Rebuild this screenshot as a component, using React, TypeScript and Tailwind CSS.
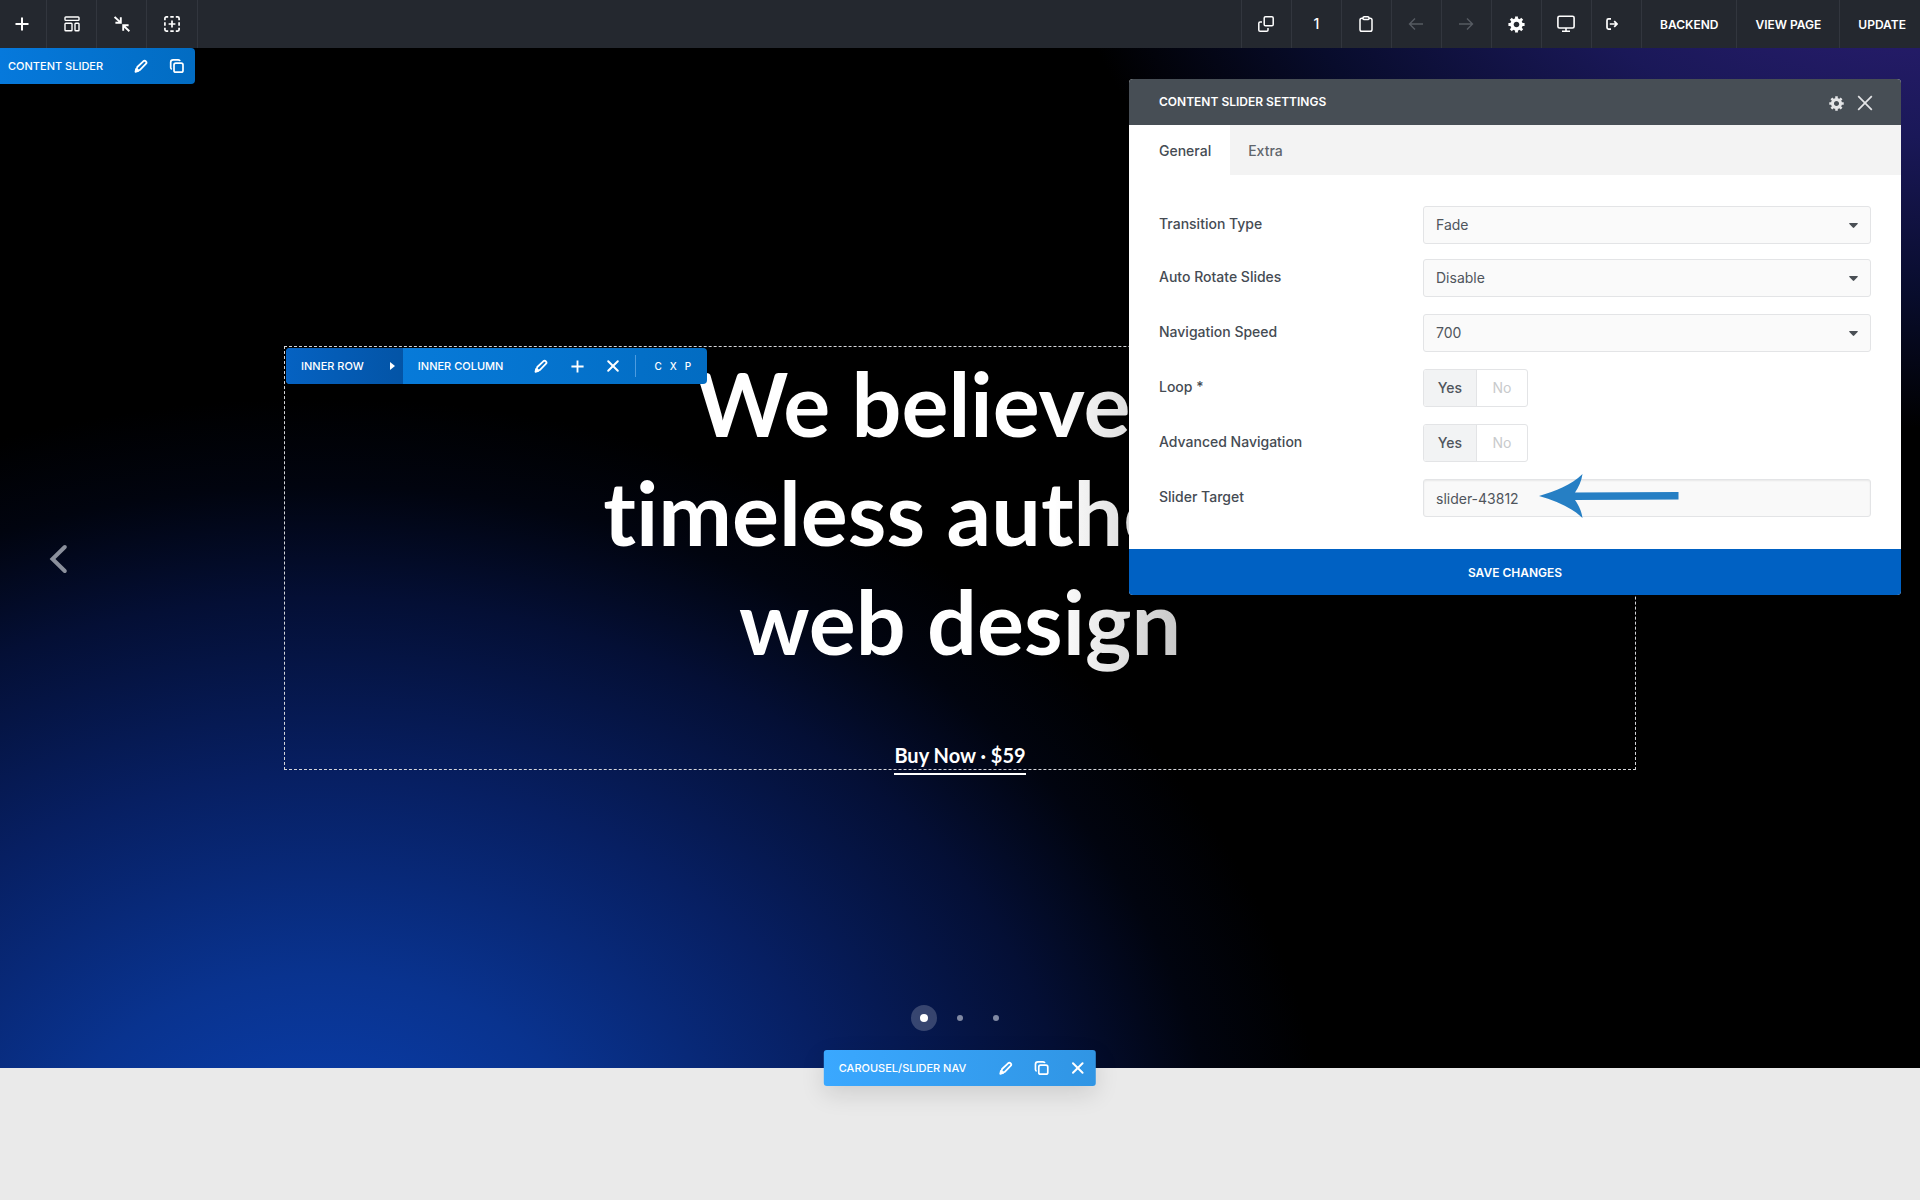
import { ReactNode, useState } from "react";

type IconProps = { className?: string };

const PlusIcon = ({ className = "size-4" }: IconProps) => (
  <svg className={className} viewBox="0 0 16 16" fill="none" stroke="currentColor" strokeWidth="2">
    <path d="M8 1.5v13M1.5 8h13" />
  </svg>
);

const CloseIcon = ({ className = "size-4" }: IconProps) => (
  <svg className={className} viewBox="0 0 16 16" fill="none" stroke="currentColor" strokeWidth="2" strokeLinecap="round">
    <path d="M3.2 3.2l9.6 9.6M12.8 3.2l-9.6 9.6" />
  </svg>
);

const PencilIcon = ({ className = "size-4" }: IconProps) => (
  <svg className={className} viewBox="0 0 16 16" fill="none" stroke="currentColor" strokeWidth="1.8" strokeLinejoin="round">
    <path d="M3.3 12.9l1-3.9 6-5.7c.8-.7 1.900-.7 2.600 0s.7 1.800-.1 2.600L7 11.800z" />
    <path d="M2.500 13.800l.7-3 2.300 2.200z" fill="currentColor" />
  </svg>
);

const CopyIcon = ({ className = "size-4" }: IconProps) => (
  <svg className={className} viewBox="0 0 16 16" fill="none" stroke="currentColor" strokeWidth="1.7" strokeLinejoin="round">
    <rect x="5" y="5.2" width="9" height="9" rx="1.8" />
    <path d="M2.9 11.2c-.8-.3-1.2-.9-1.2-1.8V4.2c0-1.400 1-2.400 2.400-2.400h5.200c.9 0 1.500.400 1.800 1.200" />
  </svg>
);

const TemplatesIcon = () => (
  <svg className="size-4" viewBox="0 0 16 16" fill="none" stroke="currentColor" strokeWidth="1.4">
    <rect x="1" y="1" width="14" height="3.4" rx=".8" />
    <rect x="1" y="7.3" width="7" height="7.4" rx=".8" />
    <rect x="11" y="7.3" width="4" height="7.4" rx=".8" />
  </svg>
);

const CollapseIcon = () => (
  <svg className="size-4" viewBox="0 0 16 16" fill="none" stroke="currentColor" strokeWidth="1.9">
    <path d="M.6.900l5.600 5.200M6.800 1.200v5.500H1.400" />
    <path d="M15.400 15.200L9.800 10M9.200 14.800V9.300h5.400" />
  </svg>
);

const SelectAreaIcon = () => (
  <svg className="size-4" viewBox="0 0 16 16" fill="none" stroke="currentColor" strokeWidth="1.7">
    <path d="M.9 4.200V2.400C.9 1.500 1.500.9 2.400.9h1.800M11.800.9h1.800c.9 0 1.500.6 1.500 1.500v1.800M15.100 11.800v1.800c0 .9-.6 1.500-1.500 1.500h-1.800M4.200 15.100H2.400c-.9 0-1.500-.6-1.500-1.500v-1.800" />
    <path d="M6.300.9h3.400M6.300 15.100h3.400M.9 6.300v3.400M15.100 6.300v3.400M8 4.600v6.800M4.600 8h6.800" />
  </svg>
);

const CloneIcon = () => (
  <svg className="size-4" viewBox="0 0 16 16" fill="none" stroke="currentColor" strokeWidth="1.5" strokeLinejoin="round">
    <rect x="6.2" y=".8" width="9" height="9" rx="1.3" />
    <path d="M4 6H2.100C1.300 6 .8 6.500.8 7.300v6.600c0 .8.500 1.300 1.300 1.300h6.600c.8 0 1.300-.5 1.300-1.300V12" />
  </svg>
);

const ClipboardIcon = () => (
  <svg className="size-4" viewBox="0 0 16 16" fill="none" stroke="currentColor" strokeWidth="1.5">
    <rect x="2" y="2.2" width="12" height="13" rx="1.8" />
    <rect x="5" y=".8" width="6" height="2.8" rx="1.2" fill="#24282f" />
  </svg>
);

const ArrowIcon = ({ className = "size-4" }: IconProps) => (
  <svg className={className} viewBox="0 0 16 16" fill="none" stroke="currentColor" strokeWidth="1.4">
    <path d="M15 8H1.5M7 2.5L1.5 8 7 13.5" />
  </svg>
);

const GearIcon = ({ className = "size-[17px]" }: IconProps) => (
  <svg className={className} viewBox="-0.5 0.5 20 20" fill="currentColor">
    <path d="M18 12h-2.180c-.17.700-.44 1.350-.81 1.930l1.540 1.540-2.100 2.100-1.540-1.540c-.58.360-1.230.630-1.910.790V19H8v-2.180c-.68-.16-1.330-.43-1.910-.79l-1.540 1.540-2.120-2.120 1.540-1.540c-.36-.58-.63-1.230-.79-1.910H1V9.030h2.170c.16-.7.440-1.350.8-1.940L2.430 5.550l2.100-2.100 1.540 1.540c.58-.37 1.240-.64 1.930-.81V2h3v2.180c.68.160 1.330.430 1.910.790l1.540-1.540 2.120 2.120-1.540 1.540c.36.590.640 1.240.8 1.940H18V12zm-8.500 1.500c1.660 0 3-1.340 3-3s-1.340-3-3-3-3 1.340-3 3 1.340 3 3 3z" />
  </svg>
);

const MonitorIcon = () => (
  <svg className="size-[18px]" viewBox="0 0 18 18" fill="none" stroke="currentColor" strokeWidth="1.6">
    <rect x=".9" y="1.2" width="16.2" height="11.8" rx="1.6" />
    <path d="M9 13v3M5 16.2h8" />
  </svg>
);

const ExitIcon = () => (
  <svg className="mr-2 size-3" viewBox="0 0 12 12" fill="none" stroke="currentColor" strokeWidth="1.7">
    <path d="M5 .9H2.500C1.500.900 1 1.500 1 2.500v7c0 1 .500 1.600 1.500 1.600H5" />
    <path d="M3.8 6h7M8.2 3.2L11 6 8.2 8.800" />
  </svg>
);

const BarButton = ({ label, dim, children }: { label: string; dim?: boolean; children: ReactNode }) => (
  <button
    type="button"
    aria-label={label}
    className={`flex w-[50px] shrink-0 items-center justify-center ${dim ? "text-[#565b62]" : "text-white"}`}
  >
    {children}
  </button>
);

const TagButton = ({ label, children }: { label: string; children: ReactNode }) => (
  <button type="button" aria-label={label} className="flex h-9 w-9 shrink-0 items-center justify-center">
    {children}
  </button>
);

const TopBar = () => (
  <header className="flex h-12 justify-between bg-[#24282f] text-[12px] font-semibold text-white">
    <div className="-ml-[3px] flex divide-x divide-[#32363e] border-r border-[#32363e]">
      <BarButton label="Add element">
        <PlusIcon />
      </BarButton>
      <BarButton label="Templates">
        <TemplatesIcon />
      </BarButton>
      <BarButton label="Collapse">
        <CollapseIcon />
      </BarButton>
      <BarButton label="Select area">
        <SelectAreaIcon />
      </BarButton>
    </div>
    <div className="flex divide-x divide-[#32363e] border-l border-[#32363e]">
      <BarButton label="Clone">
        <CloneIcon />
      </BarButton>
      <button type="button" className="w-[50px] text-sm font-medium">
        1
      </button>
      <BarButton label="Paste">
        <ClipboardIcon />
      </BarButton>
      <BarButton label="Undo" dim>
        <ArrowIcon />
      </BarButton>
      <BarButton label="Redo" dim>
        <ArrowIcon className="size-4 rotate-180" />
      </BarButton>
      <BarButton label="Settings">
        <GearIcon className="size-[19px]" />
      </BarButton>
      <BarButton label="Preview size">
        <MonitorIcon />
      </BarButton>
      <BarButton label="Exit">
        <ExitIcon />
      </BarButton>
      <a href="#backend" className="flex items-center px-[18px] pt-0.5">
        BACKEND
      </a>
      <a href="#view" className="flex items-center px-[18px] pt-0.5">
        VIEW PAGE
      </a>
      <button type="button" className="pt-0.5 pr-3.5 pl-[18px]">
        UPDATE
      </button>
    </div>
  </header>
);

const selectClass =
  "h-[38px] w-full appearance-none rounded-[3px] border border-[#e3e4e6] bg-[#fafafa] px-3 text-sm font-normal text-[#4f555c]";

const SelectField = ({ id, label, options }: { id: string; label: string; options: string[] }) => (
  <div className="flex items-center">
    <label htmlFor={id} className="w-[264px] shrink-0 pb-0.5">
      {label}
    </label>
    <div className="relative flex-1">
      <select id={id} className={selectClass}>
        {options.map((option) => (
          <option key={option}>{option}</option>
        ))}
      </select>
      <svg className="pointer-events-none absolute top-[17px] right-[13px] h-[5px] w-[9px]" viewBox="0 0 9 5" fill="#4a4f55">
        <path d="M.8 0h7.400c.6 0 .8.500.4.900L5.200 4.600c-.4.400-1 .400-1.400 0L.4.900C0 .5.200 0 .8 0z" />
      </svg>
    </div>
  </div>
);

const ToggleField = ({ name, label }: { name: string; label: string }) => {
  const [value, setValue] = useState("Yes");

  return (
    <fieldset className="flex items-center">
      <legend className="float-left w-[264px] shrink-0 pb-0.5">{label}</legend>
      <div className="flex h-[38px] divide-x divide-[#e3e4e6] overflow-hidden rounded-[3px] border border-[#e3e4e6]">
        {["Yes", "No"].map((option) => (
          <label
            key={option}
            className={`flex cursor-pointer items-center justify-center ${option === "Yes" ? "w-[53px]" : "w-[50px]"} ${
              value === option ? "bg-[#f2f3f4] text-[#4f555c]" : "font-normal text-[#c8cacc]"
            }`}
          >
            <input
              type="radio"
              name={name}
              value={option}
              checked={value === option}
              onChange={() => setValue(option)}
              className="sr-only"
            />
            {option}
          </label>
        ))}
      </div>
    </fieldset>
  );
};

const SettingsModal = () => {
  const [target, setTarget] = useState("slider-43812");

  return (
    <section className="absolute top-[79px] right-[19px] z-20 w-[772px] overflow-hidden rounded-[4px] bg-white text-sm font-medium text-[#454b53]">
      <div className="flex h-[46px] items-center justify-between bg-[#474e55] pr-7 pl-[30px] text-white">
        <h2 className="text-[12px] font-semibold">CONTENT SLIDER SETTINGS</h2>
        <div className="flex items-center gap-3 pt-0.5 text-[#e4e5e7]">
          <button type="button" aria-label="Options">
            <GearIcon />
          </button>
          <button type="button" aria-label="Close">
            <svg className="size-4" viewBox="0 0 16 16" fill="none" stroke="currentColor" strokeWidth="1.7">
              <path d="M1.2 1.2l13.6 13.6M14.8 1.2L1.2 14.8" />
            </svg>
          </button>
        </div>
      </div>
      <div className="flex h-[50px] bg-[#f3f3f3]">
        <button type="button" className="bg-white pt-0.5 pr-[19px] pl-[30px]">
          General
        </button>
        <button type="button" className="px-[18px] pt-0.5 text-[#60656c]">
          Extra
        </button>
      </div>
      <form id="slider-settings" className="flex flex-col gap-[17px] px-[30px] pt-[31px] pb-8" onSubmit={(e) => e.preventDefault()}>
        <div className="flex flex-col gap-[15px]">
          <SelectField id="transition" label="Transition Type" options={["Fade", "Slide"]} />
          <SelectField id="rotate" label="Auto Rotate Slides" options={["Disable", "3", "5"]} />
        </div>
        <SelectField id="speed" label="Navigation Speed" options={["700", "1000"]} />
        <ToggleField name="loop" label="Loop *" />
        <ToggleField name="advanced" label="Advanced Navigation" />
        <div className="flex items-center">
          <label htmlFor="target" className="w-[264px] shrink-0 pb-0.5">
            Slider Target
          </label>
          <div className="relative flex-1">
            <input
              id="target"
              type="text"
              value={target}
              onChange={(e) => setTarget(e.target.value)}
              className="h-[38px] w-full rounded-[3px] border border-[#e3e4e6] bg-[#f9f9f9] px-3 text-sm font-normal text-[#4f555c] shadow-[inset_0_1px_2px_rgba(0,0,0,0.07)]"
            />
            <svg className="pointer-events-none absolute -top-[5px] left-[116px] h-11 w-[140px]" viewBox="0 0 140 44" fill="#267fc4">
              <path d="M0 22C17 17 32 11 43.500 0 42.500 7 39.500 13.500 36 18.500L139.500 18V25.500L36 26C39.500 31 42.500 37 43.500 44 32 33 17 27 0 22z" />
            </svg>
          </div>
        </div>
      </form>
      <button type="submit" form="slider-settings" className="h-[46px] w-full bg-[#0061c3] pt-0.5 text-[12px] font-semibold text-white">
        SAVE CHANGES
      </button>
    </section>
  );
};

const Hero = () => (
  <section className="relative flex h-[85vh] items-center justify-center bg-black bg-[radial-gradient(ellipse_860px_530px_at_100%_-150px,#33207e_0%,#1a1858_45%,#080c2c_75%,#000_100%),radial-gradient(ellipse_1010px_800px_at_320px_1150px,#0a41b4_0%,#09338f_28%,#071f62_53%,#040f35_75%,#01040f_89%,transparent_100%)] bg-blend-screen">
    <div className="absolute top-0 left-0 z-10 flex h-9 items-center rounded-r-[4px] bg-linear-to-r from-[#0679dc] to-[#026cc2] pl-2 text-[11px] font-medium text-white">
      <span className="mr-5">CONTENT SLIDER</span>
      <TagButton label="Edit content slider">
        <PencilIcon />
      </TagButton>
      <TagButton label="Duplicate content slider">
        <CopyIcon />
      </TagButton>
    </div>

    <button type="button" aria-label="Previous slide" className="absolute top-1/2 left-12 -translate-y-1/2 text-[#8b909c]">
      <svg className="h-8 w-5" viewBox="0 0 20 32" fill="none" stroke="currentColor" strokeWidth="4" strokeLinecap="round">
        <path d="M16.8 5L4.5 17l12.3 12" />
      </svg>
    </button>

    <div className="relative mx-[284px] h-[424px] flex-1 border border-dashed border-[#d5d6da] pt-0.5 text-center font-[Lato,sans-serif] text-white">
      <div className="absolute top-px left-px z-10 flex h-9 items-center overflow-hidden rounded-[4px] bg-linear-to-r from-[#0a80e2] to-[#026cc2] font-[Inter,sans-serif] text-[11px] font-medium">
        <button type="button" className="flex h-full items-center gap-[26px] bg-linear-to-r from-[#0562c2] to-[#0354a6] pr-2 pl-[15px]">
          INNER ROW
          <svg className="h-2 w-[5px]" viewBox="0 0 5 8" fill="currentColor">
            <path d="M0 0l5 4-5 4z" />
          </svg>
        </button>
        <span className="pr-5 pl-[15px]">INNER COLUMN</span>
        <TagButton label="Edit column">
          <PencilIcon />
        </TagButton>
        <TagButton label="Add to column">
          <PlusIcon className="size-[15px]" />
        </TagButton>
        <TagButton label="Remove column">
          <CloseIcon />
        </TagButton>
        <div className="ml-1 flex h-[22px] items-center gap-2 border-l border-[#4d9ce0] pr-4 pl-[18px] text-[10px]">
          <button type="button">C</button>
          <button type="button">X</button>
          <button type="button">P</button>
        </div>
      </div>
      <h1 className="bg-linear-to-r from-white from-57% to-[#c4c4c4] to-67% bg-clip-text text-[88px] leading-[109px] font-bold [font-variant-ligatures:none] text-transparent">
        We believe in
        <br />
        timeless authentic
        <br />
        web design
      </h1>
      <a href="#buy" className="mt-[65px] inline-block border-b-2 border-white pb-1 text-xl leading-7 font-bold">
        Buy Now · $59
      </a>
    </div>

    <div className="absolute bottom-[37px] left-1/2 flex -translate-x-1/2 items-center">
      <button type="button" aria-label="Slide 1" className="flex size-[26px] items-center justify-center rounded-full bg-white/20">
        <span className="size-2 rounded-full bg-white" />
      </button>
      <button type="button" aria-label="Slide 2" className="ml-5 size-[6px] rounded-full bg-[#8089a3]" />
      <button type="button" aria-label="Slide 3" className="mr-[10px] ml-[30px] size-[6px] rounded-full bg-[#8089a3]" />
    </div>

    <div className="absolute -bottom-[18px] left-1/2 flex h-9 -translate-x-1/2 items-center rounded-[3px] bg-linear-to-r from-[#3aa8ff] to-[#3095e4] pl-[15px] text-[11px] font-medium whitespace-nowrap text-white shadow-[0_8px_24px_rgba(0,0,0,0.12)]">
      <span className="mr-[22px]">CAROUSEL/SLIDER NAV</span>
      <TagButton label="Edit slider nav">
        <PencilIcon />
      </TagButton>
      <TagButton label="Duplicate slider nav">
        <CopyIcon />
      </TagButton>
      <TagButton label="Remove slider nav">
        <CloseIcon />
      </TagButton>
    </div>
  </section>
);

const App = () => {
  return (
    <main className="relative min-h-screen overflow-hidden bg-[#eaeaea] font-[Inter,sans-serif]">
      <TopBar />
      <Hero />
      <SettingsModal />
    </main>
  );
};

export default App;
